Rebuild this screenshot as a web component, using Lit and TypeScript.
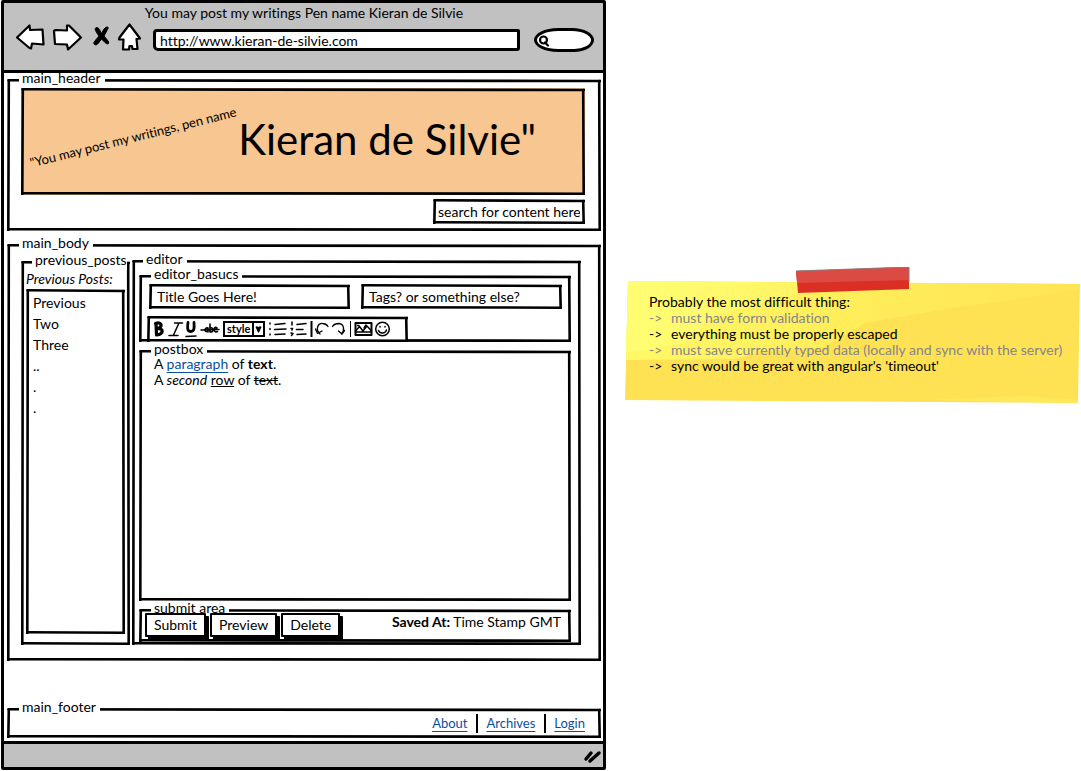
import { LitElement, html, svg, css, unsafeCSS } from "lit";
import { customElement, property } from "lit/decorators.js";

const sketchSvg =
  "<svg xmlns='http://www.w3.org/2000/svg' width='100%' height='100%' stroke='black' stroke-width='2.6' stroke-linecap='round'>" +
  "<line x1='1.5' y1='1.3' x2='100%' y2='2'/>" +
  "<line x1='1.8' y1='1.3' x2='1.3' y2='100%'/>" +
  "<svg y='100%' overflow='visible'><line x1='1.3' y1='-1.8' x2='100%' y2='-1.3'/></svg>" +
  "<svg x='100%' overflow='visible'><line x1='-1.8' y1='2' x2='-1.3' y2='100%'/></svg>" +
  "</svg>";
const sketch = unsafeCSS(`url("data:image/svg+xml,${encodeURIComponent(sketchSvg)}")`);

const shared = css`
  :host {
    font: 14px/16px Lato, "Liberation Sans", sans-serif;
    font-variant-ligatures: none;
    color: #000;
  }
  * {
    box-sizing: border-box;
  }
  .sketch {
    border: 3px solid transparent;
    background: #fff ${sketch} 0 0 / 100% 100% no-repeat border-box border-box;
  }
  fieldset {
    --inset: 0px;
    margin: 0;
    padding: 0;
    min-width: 0;
  }
  legend {
    margin-left: calc(9px - var(--inset));
    padding: 0 4px 6px 3px;
    line-height: 9px;
    background: #fff;
  }
  input,
  button,
  select {
    font: inherit;
    color: inherit;
    border-radius: 0;
  }
  input {
    width: 100%;
    min-width: 0;
    height: 25px;
    padding: 0 5px;
  }
  a {
    color: #0b4f9e;
    text-decoration: underline;
    text-underline-offset: 3px;
  }
`;

@customElement("browser-bar")
class BrowserBar extends LitElement {
  @property() heading = "";
  @property() address = "";

  static styles = [
    shared,
    css`
      :host {
        display: block;
        background: #c1c1c1;
        border-bottom: 3px solid #000;
        padding: 1px 9px 16px 10px;
      }
      .title {
        text-align: center;
        line-height: 18px;
      }
      .row {
        display: flex;
        align-items: center;
        gap: 5px;
        height: 32px;
      }
      .nav {
        display: block;
        padding: 0;
        border: 0;
        background: none;
      }
      .nav svg {
        display: block;
        overflow: visible;
      }
      .address {
        flex: 1;
        margin: 4px 9px 0 4px;
        height: 22px;
      }
      .address input,
      .find input {
        height: 22px;
        border: 3px solid #000;
        background: #fff;
      }
      .address input {
        border-radius: 4px 2px 3px 5px;
        padding: 0 4px;
      }
      .find {
        position: relative;
        width: 60px;
        height: 24px;
        margin-top: 4px;
      }
      .find input {
        height: 24px;
        border-radius: 24px 22px 20px 24px / 12px;
        padding: 0 8px 0 18px;
      }
      .glass {
        position: absolute;
        left: 4px;
        top: 6px;
      }
    `,
  ];

  render() {
    const icon = (label: string, w: number, body: unknown) => html`<button class="nav" aria-label=${label}>
      <svg width=${w} height="30" viewBox="0 0 ${w} 30" fill="#fff" stroke="#000" stroke-width="2.2" stroke-linejoin="round">${body}</svg>
    </button>`;
    return html`
      <div class="title">${this.heading}</div>
      <div class="row">
        ${icon("Back", 32, svg`<path d="M3 14.500 15.500 2.500 16 7 28.500 6.500 29.500 21.500 18 20.500 17 25.500 15.500 25Z"/>`)}
        ${icon("Forward", 32, svg`<path d="M3 8 4.500 7 16 7.500 16 2.500 18 2.500 30 14.500 17 26.500 16 21.500 4 21Z"/>`)}
        ${icon("Stop", 23, svg`<path d="M7 6C8 3.500 11 4.500 12 7.500L13.500 10.500 16 6C19 2.500 21.500 4 19.500 6.500L16 13 20.500 18.500C21.500 21.500 19 21.500 17 19.500L13.500 16 10.500 20C8 23.500 5 21.500 6 19L11 13 8.500 9.500Z" fill="#000" stroke-width="1"/>`)}
        ${icon("Home", 28, svg`<path d="M13.500 1.500 24 15.500 20.500 16 21.500 26 16.500 26 16 23 13.500 23 13 26.500 7 26.500 7.500 16.500 3 16.500 3.500 14.500Z"/>`)}
        <div class="address"><input aria-label="Address" .value=${this.address} /></div>
        <div class="find">
          <input type="text" aria-label="Find" />
          <svg class="glass" width="14" height="14" fill="none" stroke="#000" stroke-width="2.200" stroke-linecap="round">
            <circle cx="5.500" cy="6" r="3.500" /><path d="M7 8.500 10 11.500" />
          </svg>
        </div>
      </div>
    `;
  }
}

@customElement("post-editor")
class PostEditor extends LitElement {
  static styles = [
    shared,
    css`
      :host {
        display: block;
        min-width: 0;
      }
      .editor {
        --inset: 5px;
        display: flex;
        flex-direction: column;
        gap: 2px;
        padding: 0 7px 0 4px;
      }
      .basics {
        --inset: 5px;
        padding: 0 6px 0 5px;
      }
      .fields {
        display: grid;
        grid-template-columns: 1fr 1fr;
        gap: 11px;
        margin: 0 0 7px 2px;
      }
      .tools {
        display: flex;
        align-items: center;
        width: 261px;
        max-width: 100%;
        height: 26px;
        margin-bottom: -3px;
        padding: 0 2px;
      }
      .tool {
        padding: 0;
        border: 0;
        background: none;
      }
      .tool svg {
        display: block;
      }
      .style {
        position: relative;
        width: 42px;
        height: 16px;
        margin: 0 2px;
      }
      .style select {
        appearance: none;
        display: block;
        width: 100%;
        height: 16px;
        border: 2px solid #000;
        background: #fff;
        padding: 0 0 0 2px;
        font-weight: 700;
        font-size: 11px;
        line-height: 12px;
      }
      .arrow {
        position: absolute;
        right: 0;
        top: 0;
        pointer-events: none;
      }
      .text {
        min-height: 242px;
        margin-top: -3px;
        padding: 0 12px;
        outline: 0;
      }
      .text p {
        margin: 0;
      }
      .submit {
        --inset: 3px;
        display: flex;
        justify-content: space-between;
        align-items: flex-start;
        padding: 0 7px 0 3px;
      }
      .actions {
        display: flex;
        gap: 4px;
        margin-top: -5px;
        padding-bottom: 2px;
      }
      .action {
        height: 24px;
        padding: 0 7px;
        border: 2px solid #000;
        border-radius: 1px;
        background: #fff;
        box-shadow: 3px 3px 0 #000;
        white-space: nowrap;
      }
      .saved {
        margin-top: -4px;
      }
    `,
  ];

  private tool(label: string, w: number, body: unknown) {
    return html`<button class="tool" aria-label=${label}>
      <svg width=${w} height="20" viewBox="0 0 ${w} 20" fill="none" stroke="#000" stroke-width="1.500" stroke-linecap="round" stroke-linejoin="round">${body}</svg>
    </button>`;
  }

  render() {
    return html`
      <fieldset class="sketch editor">
        <legend>editor</legend>
        <fieldset class="sketch basics">
          <legend>editor_basucs</legend>
          <div class="fields">
            <input class="sketch" aria-label="Title" value="Title Goes Here!" />
            <input class="sketch" aria-label="Tags" value="Tags? or something else?" />
          </div>
          <div class="sketch tools">
            ${this.tool("Bold", 14, svg`<path d="M4 4.500 4.500 16M3.500 4.500C11 2 10.500 9 5 9.500 12 9 12 15 4.500 16" stroke-width="3.200"/>`)}
            ${this.tool("Italic", 18, svg`<path d="M8.500 4H16.500M3 16.500H12M13 4 7.500 16"/>`)}
            ${this.tool("Underline", 14, svg`<path d="M4 3.500C3 11 4 12.500 7 12.500 10 12.500 10.500 10 10 3.500" stroke-width="2.800"/><path d="M2 17.500 12 17"/>`)}
            ${this.tool("Strikethrough", 23, svg`<path d="M3 11 21 10.500"/><path d="M10 9C6 8 6 14 10 12V9 13M12 5V13C16 13 16 8 12 9M16.500 10.500C21 10 18 7 16.500 9 15.500 12 17 13.500 19.500 12.500" stroke-width="1.600"/>`)}
            <div class="style">
              <select aria-label="Style"><option>style</option></select>
              <svg class="arrow" width="13" height="16"><path d="M1 0V16" stroke="#000" stroke-width="2" /><path d="M3.500 6Q4.500 4.500 6.500 6 8.500 4.500 9.500 6L7 11.500H6Z" /></svg>
            </div>
            ${this.tool("Bullet list", 22, svg`<path d="M3 4V5M3 9.500V10.500M3 15V16M8 5.500 18 4.500M7.500 10.500 19 10M8 15.500 18 15"/>`)}
            ${this.tool("Numbered list", 21, svg`<path d="M3 3V6M2 9.500H3.500L3 11M2 14 4 14.500 2.500 16.500M8 5.500 17 4.500M7.500 10.500 14 10.500M8 15.500 17 15"/>`)}
            <svg width="3" height="20" aria-hidden="true"><path d="M1.500 2V18" stroke="#000" stroke-width="2" /></svg>
            ${this.tool("Undo", 17, svg`<path d="M7 15C2 10 5 4 9.500 4.500 12 4.500 14 6 15 7.500M2.500 10 4.500 14.500 9 12" stroke-width="1.300"/>`)}
            ${this.tool("Redo", 17, svg`<path d="M2.500 7.500C4 5 7 4.500 9 4.500 14 5 15 11 11.500 15M8.500 12 12 15 14.500 11.500" stroke-width="1.300"/>`)}
            <svg width="5" height="20" aria-hidden="true"><path d="M3.500 2V18" stroke="#000" /></svg>
            ${this.tool("Picture", 22, svg`<path d="M3.500 4H19.500V16H3.500Z" stroke-width="2"/><path d="M3.500 12 7.500 7.500 11 12 15 7 19.500 12M3.500 13H19M5.500 6.500H7M14 6 12 9"/>`)}
            ${this.tool("Smiley", 17, svg`<circle cx="8.500" cy="10" r="6.800"/><path d="M6 7.500V8M11 7.500V8M4.500 11.500C6 15 11 15 12.500 11"/>`)}
          </div>
        </fieldset>
        <fieldset class="sketch">
          <legend>postbox</legend>
          <div class="text" role="textbox" aria-label="Post" contenteditable="true">
            <p>A <a href="#">paragraph</a> of <b>text</b>.</p>
            <p>A <i>second</i> <u>row</u> of <s>text</s>.</p>
          </div>
        </fieldset>
        <fieldset class="sketch submit">
          <legend>submit area</legend>
          <div class="actions">
            ${["Submit", "Preview", "Delete"].map((name) => html`<button class="action">${name}</button>`)}
          </div>
          <div class="saved"><b>Saved At:</b> Time Stamp GMT</div>
        </fieldset>
      </fieldset>
    `;
  }
}

@customElement("sticky-note")
class StickyNote extends LitElement {
  static styles = [
    shared,
    css`
      :host {
        display: block;
        position: relative;
      }
      .paper,
      .tape {
        position: absolute;
      }
      .paper {
        inset: 0;
        width: 100%;
        height: 100%;
      }
      .tape {
        left: 37.5%;
        top: -14px;
        width: 25%;
        height: 26px;
      }
      .content {
        position: relative;
        padding: 13px 8px 29px 24px;
      }
      .content p,
      .content ul {
        margin: 0;
        padding: 0;
        list-style: none;
      }
      .line {
        display: grid;
        grid-template-columns: 22px 1fr;
      }
      .done {
        color: #85858a;
      }
    `,
  ];

  render() {
    const lines: [string, boolean][] = [
      ["must have form validation", true],
      ["everything must be properly escaped", false],
      ["must save currently typed data (locally and sync with the server)", true],
      ["sync would be great with angular's 'timeout'", false],
    ];
    return html`
      <svg class="paper" viewBox="0 0 456 122" preserveAspectRatio="none" aria-hidden="true">
        <defs>
          <linearGradient id="shine" x1="0" y1="0" x2="1" y2="0">
            <stop offset="0" stop-color="#fff866" />
            <stop offset="0.550" stop-color="#ffec59" />
            <stop offset="1" stop-color="#ffe556" />
          </linearGradient>
          <linearGradient id="glow" x1="0" y1="0" x2="1" y2="0">
            <stop offset="0" stop-color="#fffd72" />
            <stop offset="1" stop-color="#fffd72" stop-opacity="0" />
          </linearGradient>
        </defs>
        <path d="M3 0 455 3 453 122 0 119Z" fill="#ffe254" />
        <path d="M3 0 455 3 455 8 400 17 320 28 240 42 200 66 140 70 110 78 1 79Z" fill="url(#shine)" />
        <path d="M3 0 240 2 160 16 90 34 60 62 1 72Z" fill="url(#glow)" />
        <path d="M300 119 400 115 453 119 453 122Z" fill="#ffe85a" />
      </svg>
      <svg class="tape" viewBox="0 0 114 26" preserveAspectRatio="none" aria-hidden="true">
        <path d="M0 4 113 0 113 22 2 26Z" fill="#dc2f24" />
        <path d="M0 4 113 0 113 13 1 16Z" fill="#db4b44" />
        <path d="M0 4 113 0V15" fill="none" stroke="#8d7d79" stroke-width="1" />
      </svg>
      <div class="content">
        <p>Probably the most difficult thing:</p>
        <ul>
          ${lines.map(([text, done]) => html`<li class="line ${done ? "done" : ""}"><span>-&gt;</span><span>${text}</span></li>`)}
        </ul>
      </div>
    `;
  }
}

@customElement("app-root")
class AppRoot extends LitElement {
  static styles = [
    shared,
    css`
      :host {
        display: grid;
        grid-template-columns: minmax(0, 606fr) minmax(0, 456fr);
        column-gap: 19px;
        align-items: start;
        background: #fff;
      }
      .window {
        border: 3px solid #000;
        border-radius: 2px;
        margin-left: 1px;
      }
      .page {
        padding: 0 2px 3px 3px;
        display: flex;
        flex-direction: column;
        gap: 7px;
      }
      .header {
        --inset: 11px;
        padding: 0 13px 4px 11px;
      }
      .banner {
        display: flex;
        align-items: center;
        height: 107px;
        padding-left: 3px;
        background-color: #f8c690;
      }
      .tagline {
        transform: rotate(-14deg);
        margin: 0 -1px 10px 0;
        font-size: 13px;
        white-space: nowrap;
      }
      .name {
        margin: 0 0 6px;
        font-size: 42px;
        line-height: 48px;
        font-weight: 400;
        white-space: nowrap;
      }
      .search {
        display: block;
        width: 152px;
        margin: 4px 0 0 auto;
        padding: 0 2px;
      }
      .body {
        --inset: 11px;
        display: grid;
        grid-template-columns: 109px minmax(0, 1fr);
        gap: 2px;
        padding: 1px 17px 13px 11px;
      }
      .previous {
        --inset: 3px;
        display: flex;
        flex-direction: column;
        margin-top: 1px;
        padding: 0 2px 8px;
      }
      .previous legend {
        padding-right: 0;
      }
      .heading {
        margin: 1px 0 2px;
        font-size: 14px;
        line-height: 16px;
        font-weight: 400;
        font-style: italic;
        white-space: nowrap;
      }
      .posts {
        flex: 1;
        margin: 0;
        padding: 0 4px;
        list-style: none;
        line-height: 21px;
      }
      .footer {
        --inset: 11px;
        margin-top: 34px;
        padding: 0 13px 2px 11px;
      }
      .links {
        display: flex;
        justify-content: flex-end;
        margin-top: -3px;
        font-size: 13px;
        line-height: 19px;
      }
      .links a + a {
        margin-left: 9px;
      }
      .links a + a::before {
        content: "";
        display: inline-block;
        height: 19px;
        border-left: 2px solid #000;
        margin-right: 8px;
        vertical-align: top;
      }
      .status {
        display: flex;
        justify-content: flex-end;
        height: 26px;
        border-top: 3px solid #000;
        background: #c1c1c1;
      }
      .note {
        margin-top: 281px;
      }
    `,
  ];

  render() {
    return html`
      <main class="window">
        <browser-bar
          heading="You may post my writings Pen name Kieran de Silvie"
          address="http://www.kieran-de-silvie.com"
        ></browser-bar>
        <div class="page">
          <fieldset class="sketch header">
            <legend>main_header</legend>
            <div class="sketch banner">
              <span class="tagline">"You may post my writings, pen name</span>
              <h1 class="name">Kieran de Silvie"</h1>
            </div>
            <input class="sketch search" aria-label="Search" value="search for content here" />
          </fieldset>
          <fieldset class="sketch body">
            <legend>main_body</legend>
            <fieldset class="sketch previous">
              <legend>previous_posts</legend>
              <h2 class="heading">Previous Posts:</h2>
              <ul class="sketch posts">
                ${["Previous", "Two", "Three", "..", ".", "."].map((post) => html`<li>${post}</li>`)}
              </ul>
            </fieldset>
            <post-editor></post-editor>
          </fieldset>
          <fieldset class="sketch footer">
            <legend>main_footer</legend>
            <nav class="links">
              ${["About", "Archives", "Login"].map((name) => html`<a href="#">${name}</a>`)}
            </nav>
          </fieldset>
        </div>
        <div class="status">
          <svg width="20" height="22" stroke="#000" stroke-width="3.500" stroke-linecap="round" aria-hidden="true">
            <path d="M3 15 8 9M7 17 16 9" />
          </svg>
        </div>
      </main>
      <sticky-note class="note"></sticky-note>
    `;
  }
}
